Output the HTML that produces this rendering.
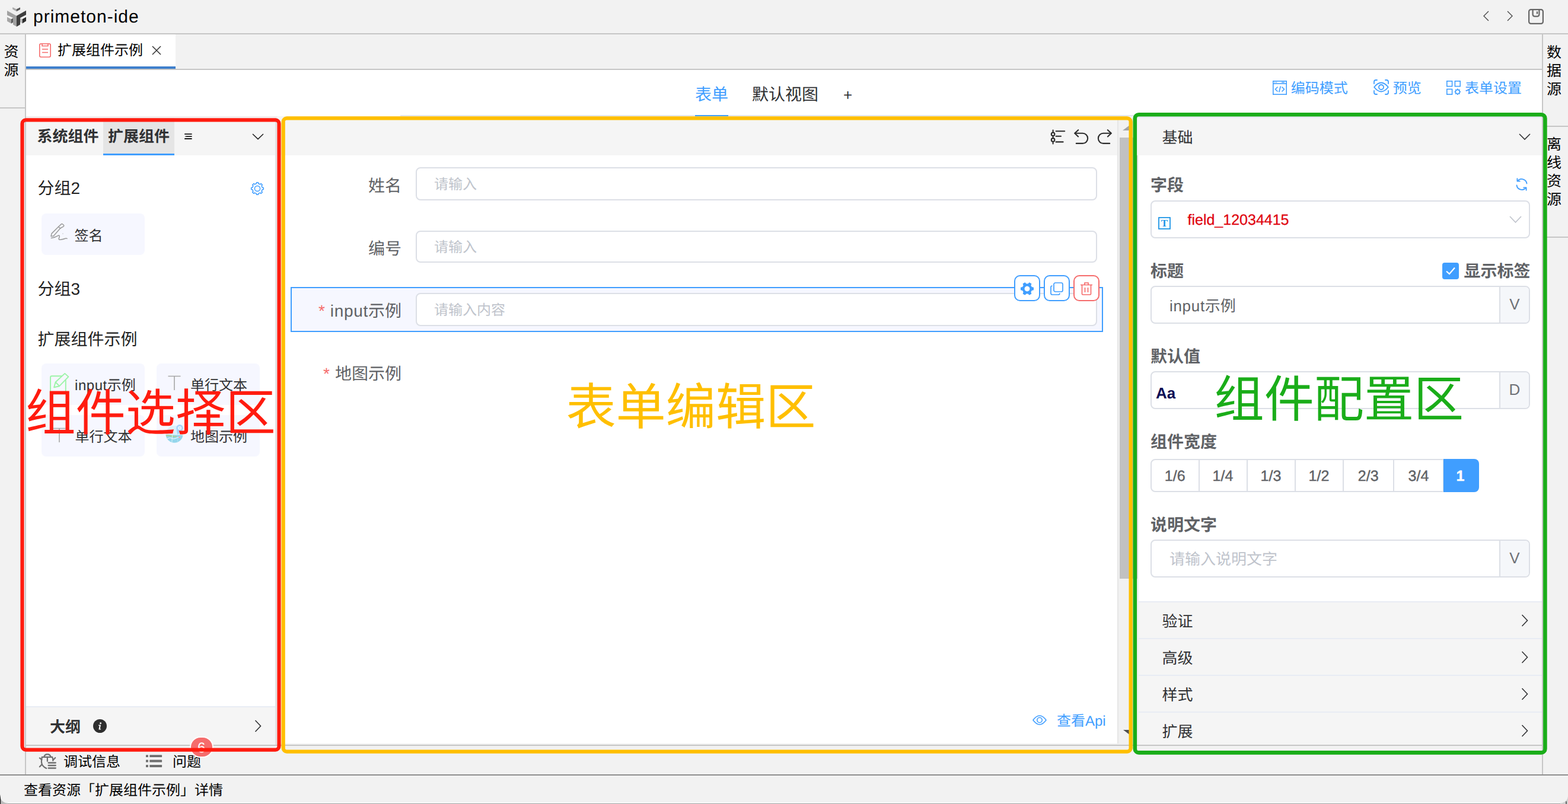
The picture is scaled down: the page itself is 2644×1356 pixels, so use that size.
<!DOCTYPE html>
<html lang="zh-CN">
<head>
<meta charset="utf-8">
<title>primeton-ide</title>
<style>
*{box-sizing:border-box;margin:0;padding:0}
html,body{width:2644px;height:1356px;overflow:hidden;background:#f2f2f2}
body{position:relative;font-family:"Liberation Sans","Noto Sans CJK SC",sans-serif;color:#303133;-webkit-font-smoothing:antialiased;text-rendering:geometricPrecision}
.a{position:absolute}
.t{position:absolute;white-space:nowrap;line-height:40px;height:40px}
.hl{position:absolute;height:2px;background:#c6c6c6}
.vl{position:absolute;width:2px;background:#c6c6c6}
.b{font-weight:bold}
.f24{font-size:24px;margin-top:.7px}.f26{font-size:26px}.f28{font-size:28px}
.blue{color:#409eff}
.g6{color:#606266}
.ph{color:#c0c4cc}
.vt{position:absolute;width:38px;text-align:center;font-size:25px;line-height:31px;color:#000}
.inp{position:absolute;border:2px solid #dcdfe6;border-radius:8px;background:#fff}
.chip{position:absolute;width:174px;height:70px;border-radius:8px;background:#f6f7ff}
.addon{position:absolute;top:0;right:0;width:50px;height:100%;background:#f5f7fa;border-left:2px solid #dcdfe6;border-radius:0 6px 6px 0;color:#6e7177;font-size:26px;text-align:center}
.sec{position:absolute;left:1920px;width:680px;height:62px;background:#f5f5f5;border-top:2px solid #e8ecf4}
.seg{position:absolute;top:0;height:56px;border:2px solid #dcdfe6;border-left:0;background:#fff;color:#606266;font-size:25px;line-height:55px;text-align:center;-webkit-text-stroke:.45px currentColor}
svg{position:absolute;overflow:visible}
.box{position:absolute;border-style:solid;border-radius:9px;pointer-events:none}
.c{display:inline-block;width:1em;white-space:nowrap}
</style>
</head>
<body>

<!-- ===== title bar ===== -->
<div class="a" style="left:0;top:0;width:2644px;height:56px;background:#f2f2f2"></div>
<svg style="left:0;top:0" width="56" height="50" viewBox="0 0 56 50">
  <polygon points="27.6,8.9 44,17.8 28.2,26.8 12,18.1" fill="#efefef"/>
  <polygon points="21.2,12.2 27.8,15.6 27.8,19.2 21.2,15.6" fill="#a9a9a9"/>
  <polygon points="27.8,15.6 34,12.6 34,15.9 27.8,19.2" fill="#585858"/>
  <polygon points="12,18.1 27.9,26.8 27.9,44.8 22,41.5 22,30.2 12,25.4" fill="#a1a1a1"/>
  <polygon points="27.9,26.8 44,17.8 44,25.1 34,30.2 34,41.6 27.9,44.9" fill="#3f3f3f"/>
  <polygon points="12,28.8 15.2,27.2 21.9,30.4 19,32.2" fill="#f6f6f6"/>
  <polygon points="12,28.8 19,32.2 19,39.8 12,35.8" fill="#a6a6a6"/>
  <polygon points="19,32.2 21.9,30.4 21.9,37.8 19,39.8" fill="#5a5a5a"/>
  <polygon points="34.1,30.4 40.8,27.2 44,28.8 37.7,32.2" fill="#f6f6f6"/>
  <polygon points="34.1,30.4 37.7,32.2 37.7,39.5 34.1,37.5" fill="#bdbdbd"/>
  <polygon points="37.7,32.2 44,28.8 44,35.4 37.7,39.5" fill="#2b2b2b"/>
</svg>
<div class="t" style="left:56px;top:9.4px;font-size:30px;color:#000;letter-spacing:1px">primeton-ide</div>
<svg style="left:2499px;top:17px" width="14" height="20" viewBox="0 0 14 20" fill="none" stroke="#4a4a4a" stroke-width="1.4"><path d="M11 2 L3 10 L11 18"/></svg>
<svg style="left:2539px;top:17px" width="14" height="20" viewBox="0 0 14 20" fill="none" stroke="#4a4a4a" stroke-width="1.4"><path d="M3 2 L11 10 L3 18"/></svg>
<svg style="left:2577px;top:15px" width="26" height="26" viewBox="0 0 26 26" fill="none" stroke="#666" stroke-width="2.2"><rect x="1.1" y="1.1" width="23.8" height="23.8" rx="3.5"/><path d="M7.6 1 V9 Q7.6 12.6 11.2 12.6 H14.8 Q18.4 12.6 18.4 9 V1"/><path d="M15 4.4 V8.6"/></svg>
<div class="hl" style="left:0;top:56px;width:2644px"></div>

<!-- ===== left sidebar ===== -->
<div class="vt" style="left:0;top:73.2px"><span class="c">资</span><br><span class="c">源</span></div>
<div class="hl" style="left:0;top:181px;width:42px"></div>
<div class="vl" style="left:42px;top:58px;height:1248px"></div>

<!-- ===== right sidebar ===== -->
<div class="vl" style="left:2600px;top:58px;height:1248px"></div>
<div class="vt" style="left:2601.5px;top:73.7px"><span class="c">数</span><br><span class="c">据</span><br><span class="c">源</span></div>
<div class="hl" style="left:2602px;top:212px;width:42px"></div>
<div class="vt" style="left:2601.5px;top:229.3px"><span class="c">离</span><br><span class="c">线</span><br><span class="c">资</span><br><span class="c">源</span></div>
<div class="hl" style="left:2602px;top:399px;width:42px"></div>

<!-- ===== tab bar ===== -->
<div class="a" style="left:44px;top:58px;width:252px;height:54px;background:#fff"></div>
<div class="a" style="left:44px;top:112px;width:252px;height:4px;background:#3e7fcc"></div>
<div class="hl" style="left:44px;top:116px;width:2556px"></div>
<svg style="left:66px;top:73px" width="20" height="24" viewBox="0 0 20 24" fill="none" stroke="#f56c6c" stroke-width="1.6"><rect x=".8" y=".8" width="18.4" height="22.4" rx="2.5"/><path d="M5 .8 V4.5 H15 V.8 M5 10 H15 M5 15.5 H15"/></svg>
<div class="t f24" style="left:97px;top:65.5px;color:#000"><span class="c">扩</span><span class="c">展</span><span class="c">组</span><span class="c">件</span><span class="c">示</span><span class="c">例</span></div>
<svg style="left:256px;top:77px" width="16" height="16" viewBox="0 0 16 16" fill="none" stroke="#333" stroke-width="1.5"><path d="M1 1 L15 15 M15 1 L1 15"/></svg>

<!-- ===== toolbar ===== -->
<div class="a" style="left:44px;top:118px;width:2556px;height:78px;background:#fff"></div>
<div class="a" style="left:675px;top:194px;width:1240px;height:2.4px;background:#e4e7ed"></div>
<div class="a" style="left:44px;top:196px;width:437px;height:3px;background:#f3eded"></div>
<div class="t f28 blue" style="left:1172px;top:140px"><span class="c">表</span><span class="c">单</span></div>
<div class="a" style="left:1172px;top:194px;width:56px;height:2.5px;background:#409eff"></div>
<div class="t f28" style="left:1268px;top:140px;color:#303133"><span class="c">默</span><span class="c">认</span><span class="c">视</span><span class="c">图</span></div>
<div class="t" style="left:1422px;top:140px;font-size:26px;color:#303133">+</div>

<svg style="left:2146px;top:136px" width="24" height="24" viewBox="0 0 24 24" fill="none" stroke="#409eff" stroke-width="1.6"><rect x=".8" y=".8" width="22.4" height="22.4"/><path d="M.8 5 H23.2"/><path d="M3 2.9 H4.4 M5.8 2.9 H7.2 M15 2.9 H20" stroke-width="1.2"/><path d="M8.5 10.5 L4.5 14.5 L8.5 18.5 M15.5 10.5 L19.5 14.5 L15.5 18.5 M13.3 9.5 L10.7 19.5"/></svg>
<div class="t f24 blue" style="left:2176.8px;top:129.5px"><span class="c">编</span><span class="c">码</span><span class="c">模</span><span class="c">式</span></div>
<svg style="left:2316px;top:134px" width="26" height="26" viewBox="0 0 26 26" fill="none" stroke="#409eff" stroke-width="1.8" stroke-linecap="round"><path d="M1 7 V4 Q1 1 4 1 H6 M20 1 H22 Q25 1 25 4 V7 M25 19 V22 Q25 25 22 25 H20 M6 25 H4 Q1 25 1 22 V19"/><path d="M1.2 13 Q7 5.5 13 5.5 Q19 5.5 24.8 13 Q19 20.5 13 20.5 Q7 20.5 1.2 13 Z"/><circle cx="13" cy="13" r="4"/></svg>
<div class="t f24 blue" style="left:2348.8px;top:129.5px"><span class="c">预</span><span class="c">览</span></div>
<svg style="left:2439px;top:136px" width="24" height="24" viewBox="0 0 24 24" fill="none" stroke="#409eff" stroke-width="1.6"><rect x=".8" y=".8" width="8.8" height="8.8"/><rect x="14.4" y=".8" width="8.8" height="8.8"/><rect x=".8" y="14.4" width="8.8" height="8.8"/><circle cx="18.8" cy="18.8" r="3.4"/><path d="M18.8 13.6 V15.4 M18.8 22.2 V24 M13.6 18.8 H15.4 M22.2 18.8 H24 M15.1 15.1 L16.4 16.4 M21.2 21.2 L22.5 22.5 M15.1 22.5 L16.4 21.2 M21.2 16.4 L22.5 15.1" stroke-width="1.8"/></svg>
<div class="t f24 blue" style="left:2470px;top:129.5px"><span class="c">表</span><span class="c">单</span><span class="c">设</span><span class="c">置</span></div>

<!-- ===== left component panel ===== -->
<div class="a" style="left:44px;top:199px;width:420px;height:1057px;background:#fff"></div>
<div class="a" style="left:464px;top:199px;width:3px;height:1057px;background:#e2e2e2"></div>
<div class="a" style="left:44px;top:199px;width:420px;height:63px;background:#f5f5f5"></div>
<div class="a" style="left:174px;top:199px;width:120px;height:59.5px;background:#e5e5e5"></div>
<div class="a" style="left:174px;top:258.5px;width:120px;height:3.5px;background:#409eff"></div>
<div class="t f26 b" style="left:62.5px;top:210px;color:#303133"><span class="c">系</span><span class="c">统</span><span class="c">组</span><span class="c">件</span></div>
<div class="t f26 b" style="left:182px;top:210px;color:#303133"><span class="c">扩</span><span class="c">展</span><span class="c">组</span><span class="c">件</span></div>
<svg style="left:310px;top:224px" width="14" height="12" viewBox="0 0 14 12" fill="none" stroke="#1a1a1a" stroke-width="1.9"><path d="M1.2 2.1 H13.6 M4 6.1 H13.6 M1.2 10 H13.6"/><path d="M1.6 6.1 L3.6 5 V7.2 Z" fill="#1a1a1a" stroke="none"/></svg>
<svg style="left:425px;top:225px" width="20" height="11" viewBox="0 0 20 11" fill="none" stroke="#1f1f1f" stroke-width="1.5"><path d="M1 1 L10 9.6 L19 1"/></svg>

<div class="t f28" style="left:63.5px;top:297.5px;color:#1f1f1f"><span class="c">分</span><span class="c">组</span>2</div>
<svg style="left:423px;top:307px" width="22" height="22" viewBox="0 0 22 22" fill="none" stroke="#409eff" stroke-width="1.5" stroke-linejoin="round"><circle cx="11" cy="11" r="4.6"/><path d="M9.25 2.78 L9.55 0.70 L12.45 0.70 L12.75 2.78 A8.40 8.40 0 0 1 15.57 3.96 L17.26 2.69 L19.31 4.74 L18.04 6.43 A8.40 8.40 0 0 1 19.22 9.25 L21.30 9.55 L21.30 12.45 L19.22 12.75 A8.40 8.40 0 0 1 18.04 15.57 L19.31 17.26 L17.26 19.31 L15.57 18.04 A8.40 8.40 0 0 1 12.75 19.22 L12.45 21.30 L9.55 21.30 L9.25 19.22 A8.40 8.40 0 0 1 6.43 18.04 L4.74 19.31 L2.69 17.26 L3.96 15.57 A8.40 8.40 0 0 1 2.78 12.75 L0.70 12.45 L0.70 9.55 L2.78 9.25 A8.40 8.40 0 0 1 3.96 6.43 L2.69 4.74 L4.74 2.69 L6.43 3.96 A8.40 8.40 0 0 1 9.25 2.78 Z"/></svg>

<div class="chip" style="left:70px;top:360px"></div>
<svg style="left:85px;top:376px" width="30" height="30" viewBox="0 0 30 30" fill="none" stroke="#9b9b9b" stroke-width="1.5" stroke-linecap="round" stroke-linejoin="round"><path d="M13.5 6.5 L18.2 2.1 Q19.5 1 20.8 2.2 L22.3 3.5 Q23.4 4.7 22.2 5.9 L16.7 9 Z"/><path d="M13.5 6.5 L2.1 17.9 L1 22.6 L5.3 21.9 L16.7 9"/><path d="M1.4 25.4 Q8 24.5 12 21.8 Q15 20 15.3 22 Q15.5 24 14.3 26 Q13.5 28.6 17 28.3 Q22 27.5 25 26.3 Q27 25.7 28.1 26.4"/><circle cx="21" cy="18.1" r=".6" fill="#9b9b9b" stroke="none"/></svg>
<div class="t f24" style="left:125.5px;top:378px;color:#303133"><span class="c">签</span><span class="c">名</span></div>

<div class="t f28" style="left:63.5px;top:468px;color:#1f1f1f"><span class="c">分</span><span class="c">组</span>3</div>
<div class="t f28" style="left:63.5px;top:552.5px;color:#1f1f1f"><span class="c">扩</span><span class="c">展</span><span class="c">组</span><span class="c">件</span><span class="c">示</span><span class="c">例</span></div>

<div class="chip" style="left:70px;top:613px"></div>
<svg style="left:83px;top:629px" width="34" height="35" viewBox="0 0 34 35" fill="none" stroke="#9cf4a8" stroke-width="1.9" stroke-linejoin="round"><path d="M21.5 5.2 H4.1 Q2.1 5.2 2.1 7.2 V31 Q2.1 33 4.1 33 H25.8 Q27.8 33 27.8 31 V12"/><path d="M8.1 24.3 L10.6 15.5 L26.3 .9 L32.4 6.4 L17.2 22.2 Z"/><path d="M10.6 15.5 L17.2 22.2"/></svg>
<div class="t f24" style="left:126px;top:630px;color:#303133"><span style="letter-spacing:.55px">input</span><span class="c">示</span><span class="c">例</span></div>
<div class="chip" style="left:264px;top:613px"></div>
<svg style="left:283px;top:633px" width="22" height="25" viewBox="0 0 22 25" fill="none" stroke="#a6a6a6" stroke-width="1.6"><path d="M.5 1.5 H21.5 M11 1.5 V25"/></svg>
<div class="t f24" style="left:321px;top:630px;color:#303133"><span class="c">单</span><span class="c">行</span><span class="c">文</span><span class="c">本</span></div>

<div class="chip" style="left:70px;top:699.5px"></div>
<svg style="left:89px;top:721px" width="22" height="25" viewBox="0 0 22 25" fill="none" stroke="#a6a6a6" stroke-width="1.6"><path d="M.5 1.5 H21.5 M11 1.5 V25"/></svg>
<div class="t f24" style="left:126.5px;top:717.5px;color:#303133"><span class="c">单</span><span class="c">行</span><span class="c">文</span><span class="c">本</span></div>
<div class="chip" style="left:264px;top:699.5px"></div>
<svg style="left:279px;top:716px" width="31" height="31" viewBox="0 0 31 31"><defs><clipPath id="mc"><circle cx="15.1" cy="16.3" r="14.5"/></clipPath></defs><g clip-path="url(#mc)"><rect x="0" y="0" width="31" height="17.6" fill="#dbf1fb"/><rect x="0" y="17.6" width="31" height="14" fill="#94d6ec"/><path d="M0 17.6 Q6 16.6 10 18 T19 19.4 L19 21 Q14 22 9 20.4 T0 20.6 Z" fill="#a7d2a3"/><path d="M27 17.6 L31 18 V21 Z" fill="#f2f0c4"/><path d="M3 23.8 L7.5 22.4 L14 24.2 L19 22.6 L25 20.6" fill="none" stroke="#fff" stroke-width="1"/><path d="M11.6 17.6 L10.8 31" stroke="#def3fa" stroke-width="1"/><path d="M21 24 Q20 27 20.5 31" stroke="#b6e2f1" stroke-width="1" fill="none"/></g><path d="M18.6 8.5 L20.4 17 L27.5 10.5 Z" fill="#a7d3fa"/><circle cx="24" cy="5.8" r="5.9" fill="#a7d3fa"/><circle cx="24" cy="5.8" r="2.9" fill="#fff"/><circle cx="24" cy="5.8" r="2" fill="#cde6fb"/><circle cx="23.6" cy="21.3" r="1.4" fill="#f5a3ad"/></svg>
<div class="t f24" style="left:321px;top:717.5px;color:#303133"><span class="c">地</span><span class="c">图</span><span class="c">示</span><span class="c">例</span></div>

<div class="a" style="left:44px;top:1191px;width:420px;height:2px;background:#e8ecf4"></div>
<div class="a" style="left:44px;top:1193px;width:420px;height:63px;background:#f5f5f5"></div>
<div class="t f26 b" style="left:84px;top:1205.5px;color:#303133"><span class="c">大</span><span class="c">纲</span></div>
<svg style="left:157px;top:1213px" width="23" height="23" viewBox="0 0 23 23"><circle cx="11.5" cy="11.5" r="11.5" fill="#2f2f2f"/><path d="M12.6 5.2 a1.5 1.5 0 1 1 -.01 0 Z M9.2 9.6 H13 L11.7 16.2 H13.2 L13 17.6 H9.4 L10.6 11 H9 Z" fill="#fff"/></svg>
<svg style="left:429px;top:1214px" width="12" height="21" viewBox="0 0 12 21" fill="none" stroke="#303133" stroke-width="1.6"><path d="M1.5 1 L10.5 10.5 L1.5 20"/></svg>

<!-- ===== form editing panel ===== -->
<div class="a" style="left:467px;top:196px;width:1444px;height:66px;background:#f5f5f5"></div>
<div class="a" style="left:467px;top:262px;width:1418px;height:992px;background:#fff"></div>
<div class="a" style="left:467px;top:1254px;width:1450px;height:2px;background:#efefef"></div>
<!-- scrollbar -->
<div class="a" style="left:1884px;top:202px;width:2px;height:1052px;background:#e6e6e6"></div>
<div class="a" style="left:1886px;top:202px;width:34px;height:1052px;background:#f1f1f1"></div>
<div class="a" style="left:1888px;top:232px;width:30px;height:743.5px;background:#c1c1c1"></div>
<svg style="left:1893px;top:211px" width="12" height="9" viewBox="0 0 12 9"><path d="M0 9 L12 9 L12 0 Z" fill="#a3a3a3"/></svg>
<svg style="left:1894px;top:1231px" width="12" height="9" viewBox="0 0 12 9"><path d="M0 0 H12 V9 Z" fill="#505050"/></svg>
<!-- header icons -->
<svg style="left:1771px;top:218px" width="26" height="26" viewBox="0 0 26 26" fill="none" stroke="#2d2d2d" stroke-width="2.1" stroke-linecap="round"><path d="M4.6 1.6 V5.4 M4.6 11.2 V15 M4.6 20.8 V24.4"/><circle cx="4.6" cy="8.3" r="2.8"/><circle cx="4.6" cy="17.9" r="2.8"/><path d="M9.6 3.2 H24.2 M9.6 11.8 H18 M9.6 21.4 H21.6"/></svg>
<svg style="left:1811px;top:218px" width="26" height="26" viewBox="0 0 26 26" fill="none" stroke="#2d2d2d" stroke-width="2.1" stroke-linecap="round" stroke-linejoin="round"><path d="M7.2 1.2 L1.2 6.8 L7.2 12.4"/><path d="M1.6 6.8 H14.6 A8.55 8.55 0 0 1 14.6 23.9 H3.8"/></svg>
<svg style="left:1849.5px;top:218px" width="26" height="26" viewBox="0 0 26 26" fill="none" stroke="#2d2d2d" stroke-width="2.1" stroke-linecap="round" stroke-linejoin="round"><path d="M17.8 1.2 L23.8 6.8 L17.8 12.4"/><path d="M23.4 6.8 H10.4 A8.55 8.55 0 0 0 10.4 23.9 H21.2"/></svg>

<!-- fields -->
<div class="t f28 g6" style="left:500px;top:293.5px;width:177px;text-align:right"><span class="c">姓</span><span class="c">名</span></div>
<div class="inp" style="left:701px;top:282px;width:1149px;height:55.5px"></div>
<div class="t f24 ph" style="left:732px;top:291.5px"><span class="c">请</span><span class="c">输</span><span class="c">入</span></div>

<div class="t f28 g6" style="left:500px;top:399.5px;width:177px;text-align:right"><span class="c">编</span><span class="c">号</span></div>
<div class="inp" style="left:701px;top:388.5px;width:1149px;height:54.5px"></div>
<div class="t f24 ph" style="left:732px;top:397.5px"><span class="c">请</span><span class="c">输</span><span class="c">入</span></div>

<div class="a" style="left:490px;top:484px;width:1370px;height:76px;background:#f6f7ff;border:2px solid #409eff"></div>
<div class="t f28 g6" style="left:500px;top:505px;width:177px;text-align:right"><span style="color:#f56c6c;margin-right:9px">*</span><span style="letter-spacing:.7px">input</span><span class="c">示</span><span class="c">例</span></div>
<div class="inp" style="left:701px;top:494px;width:1149px;height:55.5px"></div>
<div class="t f24 ph" style="left:732px;top:503px"><span class="c">请</span><span class="c">输</span><span class="c">入</span><span class="c">内</span><span class="c">容</span></div>

<div class="a" style="left:1710px;top:464px;width:44px;height:43.5px;border:2px solid #409eff;border-radius:10px;background:#fff"></div>
<svg style="left:1720px;top:474.8px" width="24" height="24" viewBox="0 0 24 24"><path transform="rotate(90 12 12)" d="M9.8 1 H14.2 L14.9 4.1 L17.6 5.6 L20.6 4.6 L22.8 8.4 L20.5 10.5 V13.5 L22.8 15.6 L20.6 19.4 L17.6 18.4 L14.9 19.9 L14.2 23 H9.8 L9.1 19.9 L6.4 18.4 L3.4 19.4 L1.2 15.6 L3.5 13.5 V10.5 L1.2 8.4 L3.4 4.6 L6.4 5.6 L9.1 4.1 Z M12 7.6 a4.4 4.4 0 1 0 .01 0 Z" fill="#409eff" fill-rule="evenodd"/></svg>
<div class="a" style="left:1760px;top:464px;width:43.5px;height:43.5px;border:2px solid #409eff;border-radius:10px;background:#fff"></div>
<svg style="left:1771px;top:476px" width="22" height="22" viewBox="0 0 22 22" fill="none" stroke="#409eff" stroke-width="1.7"><rect x="6" y="1" width="15" height="15" rx="2.5"/><path d="M3.5 6 Q1 6 1 8.5 V18.5 Q1 21 3.5 21 H13.5 Q16 21 16 18.5"/></svg>
<div class="a" style="left:1810px;top:464px;width:43.5px;height:43.5px;border:2px solid #f56c6c;border-radius:10px;background:#fff"></div>
<svg style="left:1822px;top:476px" width="20" height="22" viewBox="0 0 20 22" fill="none" stroke="#f56c6c" stroke-width="1.7"><path d="M0 4.5 H20 M7 4.5 V1 H13 V4.5 M2.5 4.5 V19.5 Q2.5 21 4 21 H16 Q17.5 21 17.5 19.5 V4.5 M7.5 9 V17 M12.5 9 V17"/></svg>

<div class="t f28 g6" style="left:500px;top:611px;width:177px;text-align:right"><span style="color:#f56c6c;margin-right:9px">*</span><span class="c">地</span><span class="c">图</span><span class="c">示</span><span class="c">例</span></div>

<svg style="left:1741px;top:1206px" width="24" height="17" viewBox="0 0 24 17" fill="none" stroke="#409eff" stroke-width="1.6"><path d="M1 8.5 Q6.5 1 12 1 Q17.5 1 23 8.5 Q17.5 16 12 16 Q6.5 16 1 8.5 Z"/><circle cx="12" cy="8.5" r="4.2"/></svg>
<div class="t f24 blue" style="left:1782px;top:1196px"><span class="c">查</span><span class="c">看</span>Api</div>

<!-- ===== right config panel ===== -->
<div class="a" style="left:1920px;top:196px;width:680px;height:1060px;background:#fff"></div>
<div class="a" style="left:1917px;top:196px;width:683px;height:3px;background:#e8ebf3"></div>
<div class="a" style="left:1917px;top:199px;width:683px;height:63px;background:#f5f5f5"></div>
<div class="t f26" style="left:1959.5px;top:212px;color:#303133"><span class="c">基</span><span class="c">础</span></div>
<svg style="left:2561px;top:225px" width="20" height="11" viewBox="0 0 20 11" fill="none" stroke="#303133" stroke-width="1.6"><path d="M1 1 L10 10 L19 1"/></svg>

<div class="t f28 b g6" style="left:1940px;top:293px"><span class="c">字</span><span class="c">段</span></div>
<svg style="left:2555px;top:300px" width="22" height="22" viewBox="0 0 22 22" fill="none" stroke="#409eff" stroke-width="1.8" stroke-linecap="round" stroke-linejoin="round"><g transform="translate(22 0) scale(-1 1)"><path d="M2.5 9.5 A8.8 8.8 0 0 1 18 5.2 M19.5 12.5 A8.8 8.8 0 0 1 4 16.8"/><path d="M18.6 1.2 V5.6 H14.2 M3.4 20.8 V16.4 H7.8"/></g></svg>
<div class="inp" style="left:1940px;top:338px;width:640px;height:63.5px"></div>
<svg style="left:1952.5px;top:365.5px" width="21" height="21" viewBox="0 0 21 21"><rect x="1" y="1" width="19" height="19" fill="none" stroke="#1e96e6" stroke-width="1.8"/><text x="10.5" y="16.2" text-anchor="middle" font-family="Liberation Serif,serif" font-weight="bold" font-size="17" fill="#1e96e6">T</text></svg>
<div class="t" style="left:2002.5px;top:351px;font-size:25px;color:#e0040f;-webkit-text-stroke:.3px #e0040f">field_12034415</div>
<svg style="left:2544.5px;top:364px" width="21" height="12" viewBox="0 0 21 12" fill="none" stroke="#c0c4cc" stroke-width="1.7"><path d="M1 1 L10.5 11 L20 1"/></svg>

<div class="t f28 b g6" style="left:1940px;top:438px"><span class="c">标</span><span class="c">题</span></div>
<div class="a" style="left:2432px;top:443px;width:28px;height:28px;background:#409eff;border-radius:4px"></div>
<svg style="left:2437px;top:449px" width="18" height="16" viewBox="0 0 18 16" fill="none" stroke="#fff" stroke-width="2.2"><path d="M2 8.5 L7 13 L16 2.5"/></svg>
<div class="t f28 b g6" style="left:2468.5px;top:438px"><span class="c">显</span><span class="c">示</span><span class="c">标</span><span class="c">签</span></div>
<div class="inp" style="left:1940px;top:482px;width:640px;height:63.5px"><div class="addon" style="line-height:58px">V</div></div>
<div class="t f26 g6" style="left:1972px;top:495.5px"><span style="letter-spacing:.68px">input</span><span class="c">示</span><span class="c">例</span></div>

<div class="t f28 b g6" style="left:1940px;top:582px"><span class="c">默</span><span class="c">认</span><span class="c">值</span></div>
<div class="inp" style="left:1940px;top:626px;width:640px;height:63.5px"><div class="addon" style="line-height:58px">D</div></div>
<div class="t b" style="left:1949px;top:643px;font-size:26px;color:#0d0d55">Aa</div>

<div class="t f28 b g6" style="left:1940px;top:725.5px"><span class="c">组</span><span class="c">件</span><span class="c">宽</span><span class="c">度</span></div>
<div class="a" style="left:1940px;top:774px;width:555px;height:56px">
  <div class="seg" style="left:0;width:82.5px;border-left:2px solid #dcdfe6;border-radius:8px 0 0 8px">1/6</div>
  <div class="seg" style="left:82.5px;width:81px">1/4</div>
  <div class="seg" style="left:163.5px;width:81px">1/3</div>
  <div class="seg" style="left:244.5px;width:81px">1/2</div>
  <div class="seg" style="left:325.5px;width:85.5px">2/3</div>
  <div class="seg" style="left:411px;width:84px">3/4</div>
  <div class="seg b" style="left:493.5px;width:60px;background:#409eff;border-color:#409eff;color:#fff;border-radius:0 8px 8px 0">1</div>
</div>

<div class="t f28 b g6" style="left:1940px;top:865.5px"><span class="c">说</span><span class="c">明</span><span class="c">文</span><span class="c">字</span></div>
<div class="inp" style="left:1940px;top:910px;width:640px;height:63.6px"><div class="addon" style="line-height:58px">V</div></div>
<div class="t f26 ph" style="left:1972px;top:923px"><span class="c">请</span><span class="c">输</span><span class="c">入</span><span class="c">说</span><span class="c">明</span><span class="c">文</span><span class="c">字</span></div>

<div class="sec" style="top:1014px"></div>
<div class="sec" style="top:1076px"></div>
<div class="sec" style="top:1138px"></div>
<div class="sec" style="top:1200px;height:56px"></div>
<div class="t f26" style="left:1959.5px;top:1028px;color:#303133"><span class="c">验</span><span class="c">证</span></div>
<div class="t f26" style="left:1959.5px;top:1090px;color:#303133"><span class="c">高</span><span class="c">级</span></div>
<div class="t f26" style="left:1959.5px;top:1152px;color:#303133"><span class="c">样</span><span class="c">式</span></div>
<div class="t f26" style="left:1959.5px;top:1214px;color:#303133"><span class="c">扩</span><span class="c">展</span></div>
<svg style="left:2565px;top:1036px" width="12" height="21" viewBox="0 0 12 21" fill="none" stroke="#303133" stroke-width="1.6"><path d="M1.5 1 L10.5 10.5 L1.5 20"/></svg>
<svg style="left:2565px;top:1098px" width="12" height="21" viewBox="0 0 12 21" fill="none" stroke="#303133" stroke-width="1.6"><path d="M1.5 1 L10.5 10.5 L1.5 20"/></svg>
<svg style="left:2565px;top:1160px" width="12" height="21" viewBox="0 0 12 21" fill="none" stroke="#303133" stroke-width="1.6"><path d="M1.5 1 L10.5 10.5 L1.5 20"/></svg>
<svg style="left:2565px;top:1222px" width="12" height="21" viewBox="0 0 12 21" fill="none" stroke="#303133" stroke-width="1.6"><path d="M1.5 1 L10.5 10.5 L1.5 20"/></svg>

<!-- ===== bottom bars ===== -->
<div class="hl" style="left:44px;top:1256px;width:2556px"></div>
<svg style="left:66px;top:1270px" width="29" height="28" viewBox="0 0 29 28" fill="none" stroke="#6f6f6f" stroke-width="2.2" stroke-linecap="round"><path d="M8.3 6.7 A5.7 5.7 0 0 1 19.5 6.7"/><path d="M4.8 6.8 H22.1"/><path d="M4.8 7 Q2.6 17 6 21.2 Q8.6 24.6 12.2 25.9"/><path d="M13.9 6.8 V13.8"/><path d="M22.1 6.8 Q23.4 9.6 23.3 13"/><path d="M.8 8.4 L4.5 11.4 M.8 23.2 L4.6 19.4 M27.2 8 L23.7 11.8"/><path d="M15.6 16.5 H27.8 M15.6 21 H27.8 M15.6 25.5 H27.8" stroke-width="2.3"/></svg>
<div class="t f24" style="left:107px;top:1265.5px;color:#000"><span class="c">调</span><span class="c">试</span><span class="c">信</span><span class="c">息</span></div>
<svg style="left:246px;top:1273px" width="28" height="22" viewBox="0 0 28 22" fill="#6e6e6e"><rect x="0" y=".2" width="3.9" height="3.9" rx=".6"/><rect x="6.3" y=".2" width="20.8" height="3.9" rx=".6"/><rect x="0" y="8.4" width="3.9" height="4.1" rx=".6"/><rect x="6.3" y="8.4" width="20.8" height="4.1" rx=".6"/><rect x="0" y="17" width="3.9" height="3.9" rx=".6"/><rect x="6.3" y="17" width="20.8" height="3.9" rx=".6"/></svg>
<div class="t f24" style="left:291px;top:1265.5px;color:#000"><span class="c">问</span><span class="c">题</span></div>
<div class="a" style="left:319.5px;top:1242px;width:40.5px;height:36px;border-radius:18px;background:#f56c6c;border:2px solid #fff;color:#fff;font-size:24px;line-height:35px;text-align:center">6</div>
<div class="a" style="left:0;top:1306px;width:2644px;height:2px;background:#8e8e8e"></div>
<div class="t f24" style="left:40px;top:1313.5px;color:#000"><span class="c">查</span><span class="c">看</span><span class="c">资</span><span class="c">源</span><span class="c">「</span><span class="c">扩</span><span class="c">展</span><span class="c">组</span><span class="c">件</span><span class="c">示</span><span class="c">例</span><span class="c">」</span><span class="c">详</span><span class="c">情</span></div>
<div class="a" style="left:0;top:1354px;width:2644px;height:1px;background:#fff"></div>
<div class="a" style="left:0;top:1355px;width:2644px;height:1px;background:#9c9c9c"></div>
<svg style="left:0;top:1342px" width="13" height="14" viewBox="0 0 13 14"><path d="M0 0 A12.5 12.5 0 0 0 12.5 12.5 H13 V14 H0 Z" fill="#bdbdbd"/><path d="M0 -2 V14 H1.2 V6 Q.8 2 0 -2Z" fill="#1c1c1c"/></svg>
<svg style="left:2631px;top:1342px" width="13" height="14" viewBox="0 0 13 14"><path d="M13 0 A12.5 12.5 0 0 1 .5 12.5 H0 V14 H13 Z" fill="#d0d0d0"/><path d="M9 9.5 H11 V14 H9 Z" fill="#6a6a6a"/></svg>

<!-- ===== annotation boxes ===== -->
<svg style="left:0;top:0" width="2644" height="1356" viewBox="0 0 2644 1356" fill="none">
<rect x="37.5" y="202.4" width="433" height="1062.2" rx="6" stroke="#ff1b0f" stroke-width="6.2"/>
<rect x="477.65" y="199.35" width="1429" height="1068.2" rx="6" stroke="#ffbf00" stroke-width="6.3"/>
<rect x="1913.8" y="193.3" width="691.6" height="1076.1" rx="6.5" stroke="#1aad19" stroke-width="6.6"/>
</svg>
<svg style="left:0;top:0" width="2644" height="1356" viewBox="0 0 2644 1356" role="img" aria-label="组件选择区"><text x="43.2" y="726" font-family="'Liberation Sans','Noto Sans CJK SC',sans-serif" font-size="84.3" fill="#ff1b0f">组件选择区</text></svg>
<svg style="left:0;top:0" width="2644" height="1356" viewBox="0 0 2644 1356" role="img" aria-label="表单编辑区"><text x="954.4" y="716.4" font-family="'Liberation Sans','Noto Sans CJK SC',sans-serif" font-size="84.2" fill="#ffbf00">表单编辑区</text></svg>
<svg style="left:0;top:0" width="2644" height="1356" viewBox="0 0 2644 1356" role="img" aria-label="组件配置区"><text x="2047.6" y="702.8" font-family="'Liberation Sans','Noto Sans CJK SC',sans-serif" font-size="84.1" fill="#1aad19">组件配置区</text></svg>

</body>
</html>
